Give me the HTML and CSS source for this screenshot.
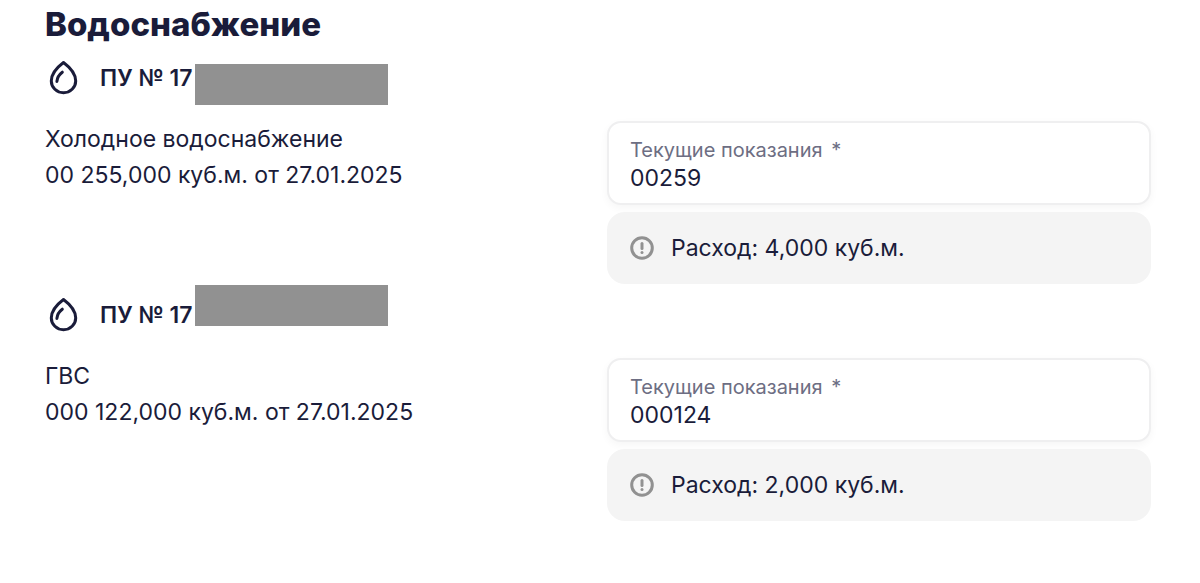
FILE: index.html
```html
<!DOCTYPE html>
<html lang="ru">
<head>
    <meta charset="UTF-8">
    <meta name="viewport" content="width=device-width, initial-scale=1.0">
    <title>Водоснабжение</title>
    <link rel="stylesheet" href="styles.css">
</head>
<body>
    <main class="page">
        <h1>Водоснабжение</h1>

        <!-- Холодная вода -->
        <section class="meter">
            <div class="meter-head">
                <svg class="drop-icon" viewBox="0 0 36 36" aria-hidden="true">
                    <path d="M18.5 2.5C14.5 5.5 6.3 12.8 6.3 21a12.2 11.7 0 0 0 24.4 0C30.7 12.8 22.5 5.5 18.5 2.5Z"/>
                    <path d="M17.3 12.2C14.3 14.4 12.3 17.4 11.9 21.4"/>
                </svg>
                <h2>ПУ № 17</h2>
                <span class="mask"></span>
            </div>
            <div class="meter-body">
                <div class="meter-info">
                    <p>Холодное водоснабжение</p>
                    <p>00 255,000 куб.м. от 27.01.2025</p>
                </div>
                <div class="meter-form">
                    <div class="field">
                        <label for="cold">Текущие показания <span class="required">*</span></label>
                        <input type="text" id="cold" name="cold" value="00259" inputmode="numeric" required>
                    </div>
                    <div class="note">
                        <svg class="note-icon" viewBox="0 0 24 24" aria-hidden="true">
                            <circle cx="12" cy="12" r="10.3"/>
                            <path d="M12 7.6v5"/>
                            <path d="M12 16.4v.1"/>
                        </svg>
                        <span>Расход: 4,000 куб.м.</span>
                    </div>
                </div>
            </div>
        </section>

        <!-- Горячая вода -->
        <section class="meter">
            <div class="meter-head">
                <svg class="drop-icon" viewBox="0 0 36 36" aria-hidden="true">
                    <path d="M18.5 2.5C14.5 5.5 6.3 12.8 6.3 21a12.2 11.7 0 0 0 24.4 0C30.7 12.8 22.5 5.5 18.5 2.5Z"/>
                    <path d="M17.3 12.2C14.3 14.4 12.3 17.4 11.9 21.4"/>
                </svg>
                <h2>ПУ № 17</h2>
                <span class="mask mask-high"></span>
            </div>
            <div class="meter-body">
                <div class="meter-info">
                    <p>ГВС</p>
                    <p>000 122,000 куб.м. от 27.01.2025</p>
                </div>
                <div class="meter-form">
                    <div class="field">
                        <label for="hot">Текущие показания <span class="required">*</span></label>
                        <input type="text" id="hot" name="hot" value="000124" inputmode="numeric" required>
                    </div>
                    <div class="note">
                        <svg class="note-icon" viewBox="0 0 24 24" aria-hidden="true">
                            <circle cx="12" cy="12" r="10.3"/>
                            <path d="M12 7.6v5"/>
                            <path d="M12 16.4v.1"/>
                        </svg>
                        <span>Расход: 2,000 куб.м.</span>
                    </div>
                </div>
            </div>
        </section>
    </main>
</body>
</html>
```
FILE: styles.css
```css
* {
    box-sizing: border-box;
}
body {
    margin: 0;
    background-color: #fff;
    color: #1a1c3a;
    font-family: Inter, "Liberation Sans", sans-serif;
    font-size: 23px;
    line-height: 36px;
}
h1, h2, p {
    margin: 0;
}
.page {
    padding: 4px 49px 24px 45px;
}
h1 {
    margin-bottom: 7px;
    font-size: 33px;
    font-weight: 800;
    line-height: 40px;
}
.meter {
    margin-bottom: 4px;
}
.meter-head {
    position: relative;
    display: flex;
    align-items: center;
    gap: 19px;
    height: 54px;
    margin-bottom: 16px;
}
.meter-head h2 {
    font-size: 23px;
    font-weight: 600;
}
.drop-icon {
    width: 36px;
    height: 36px;
    fill: none;
    stroke: #1a1c3a;
    stroke-width: 3;
    stroke-linecap: round;
    stroke-linejoin: round;
}
/* Закрывает номер прибора */
.mask {
    position: absolute;
    top: 13px;
    left: 150px;
    width: 193px;
    height: 41px;
    background-color: #919191;
}
.mask-high {
    top: -3px;
}
.meter-body {
    display: grid;
    grid-template-columns: 1fr 1fr;
    gap: 18px;
}
.meter-form {
    display: flex;
    flex-direction: column;
    gap: 7px;
}
.field {
    display: flex;
    flex-direction: column;
    padding: 13px 21px 11px;
    border: 2px solid #efeff0;
    border-radius: 14px;
    background-color: #fff;
    box-shadow: 0 3px 8px rgba(0, 0, 0, 0.04);
}
.field label {
    color: #6d6e83;
    font-size: 20px;
    line-height: 28px;
}
.required {
    margin-left: 3px;
}
.field input {
    width: 100%;
    height: 28px;
    padding: 0;
    border: none;
    outline: none;
    background: none;
    color: inherit;
    font: inherit;
    line-height: 28px;
}
.note {
    display: flex;
    align-items: center;
    gap: 17px;
    padding: 18px 23px;
    border-radius: 18px;
    background-color: #f4f4f4;
}
.note-icon {
    width: 24px;
    height: 24px;
    fill: none;
    stroke: #919191;
    stroke-width: 3;
    stroke-linecap: round;
}
```
